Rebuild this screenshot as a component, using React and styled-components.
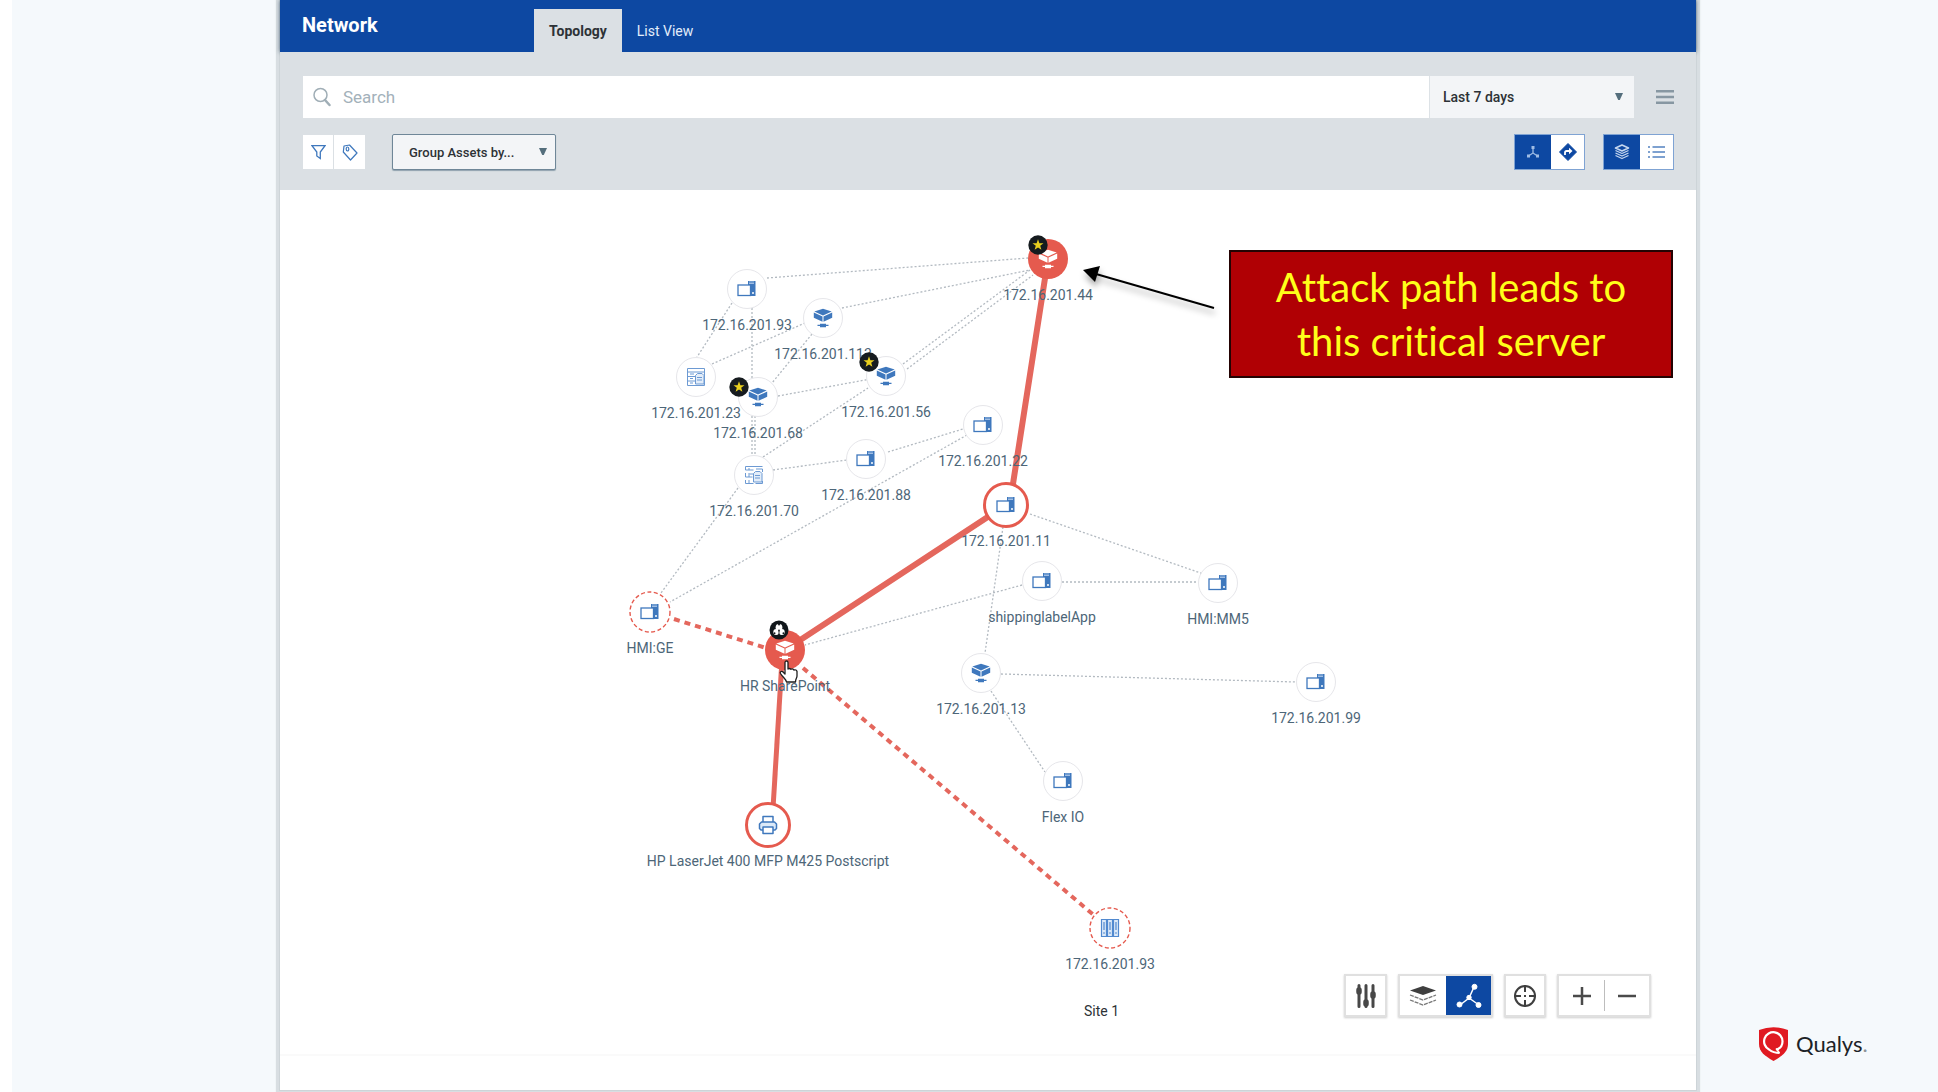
import React from "react";
import styled, { createGlobalStyle, css } from "styled-components";

const color = {
  blue: "#0d48a2",
  bar: "#dbe0e4",
  side: "#f5f9fc",
  icon: "#3f78bd",
  red: "#e55a4e",
  path: "#e4675d",
  text: "#4d6678",
  ink: "#2d3236",
};

const GlobalStyle = createGlobalStyle`
  * { box-sizing: border-box; }
  body { margin: 0; background: #fff; font-family: Roboto, "Liberation Sans", sans-serif; }
  button, input, select { font: inherit; margin: 0; }
  svg { display: block; }
`;

const Page = styled.div`
  display: grid;
  grid-template-columns: 263px minmax(0, 1fr) 237px;
  column-gap: 5px;
  min-height: 100vh;
  margin-left: 12px;
  background: ${color.side};
  overflow: hidden;
`;

const Panel = styled.main`
  grid-column: 2;
  display: flex;
  flex-direction: column;
  margin-bottom: 2px;
  background: #fff;
  box-shadow: 0 0 0 1px #cdd4d8, 0 0 1px 4px #d8dee2;
`;

const Header = styled.header`
  display: flex;
  height: 52px;
  background: ${color.blue};
  box-shadow: 0 0 4px rgba(20, 50, 80, 0.7);
`;

const Title = styled.h1`
  width: 254px;
  margin: 0;
  padding: 0 22px;
  color: #fff;
  font-size: 20px;
  font-weight: 700;
  line-height: 50px;
`;

const Tabs = styled.nav`
  display: flex;
  align-items: flex-end;
`;

const Tab = styled.button`
  height: 43px;
  padding: 0 15px;
  border: 0;
  background: ${(p) => (p.$active ? color.bar : "transparent")};
  color: ${(p) => (p.$active ? color.ink : "#e3edfa")};
  font-size: 14px;
  font-weight: ${(p) => (p.$active ? 700 : 400)};
`;

const Controls = styled.section`
  position: relative;
  display: flex;
  flex-direction: column;
  gap: 16px;
  height: 138px;
  padding: 24px 22px 0 23px;
  background: ${color.bar};
`;

const Row = styled.div`
  display: flex;
  align-items: center;
`;

const SearchBox = styled.label`
  flex: 1;
  display: flex;
  align-items: center;
  gap: 12px;
  height: 42px;
  padding-left: 10px;
  background: #fff;
`;

const SearchInput = styled.input`
  flex: 1;
  min-width: 0;
  height: 40px;
  padding: 0;
  border: 0;
  outline: 0;
  background: none;
  font-size: 17px;
  &::placeholder { color: #a3b1ba; opacity: 1; }
`;

const SelectWrap = styled.span`
  position: relative;
  display: block;
  width: ${(p) => p.$width}px;
  height: ${(p) => p.$height}px;
  margin-left: ${(p) => p.$gap || 0}px;
  svg {
    position: absolute;
    right: ${(p) => p.$arrow}px;
    top: 50%;
    margin-top: -4px;
    pointer-events: none;
  }
`;

const Select = styled.select`
  appearance: none;
  width: 100%;
  height: 100%;
  padding: 0 ${(p) => (p.$outlined ? 16 : 13)}px;
  border: 0 solid #dde2e6;
  border-left-width: 1px;
  border-radius: 0;
  background: #f3f5f7;
  color: ${color.ink};
  font-size: 14px;
  font-weight: 500;
  ${(p) =>
    p.$outlined &&
    css`
      border: 1px solid #6f8798;
      border-radius: 2px;
      box-shadow: 0 1px 1px #8fa1ad;
      font-size: 13px;
    `}
`;

const MenuButton = styled.button`
  display: flex;
  margin-left: 22px;
  padding: 0;
  border: 0;
  background: none;
`;

const Group = styled.div`
  display: flex;
  height: ${(p) => (p.$outlined ? 36 : 34)}px;
  border: ${(p) => (p.$outlined ? "1px solid #7fa3d3" : "0")};
  gap: ${(p) => (p.$outlined ? 0 : 1)}px;
`;

const Toggles = styled.div`
  display: flex;
  gap: 18px;
  margin-left: auto;
`;

const IconButton = styled.button`
  display: flex;
  align-items: center;
  justify-content: center;
  width: ${(p) => p.$width}px;
  padding: 0;
  border: 0;
  background: ${(p) => (p.$active ? color.blue : "#fff")};
`;

const Canvas = styled.section`
  position: relative;
  flex: 1;
  min-height: 864px;
  overflow: hidden;
`;

const Footer = styled.footer`
  height: 36px;
  border-top: 2px solid #fafafa;
`;

const Edges = styled.svg`
  position: absolute;
  left: 0;
  top: 0;
`;

const NodeBox = styled.div`
  position: absolute;
  left: ${(p) => p.$x}px;
  top: ${(p) => p.$y}px;
  width: 0;
  display: flex;
  flex-direction: column;
  align-items: center;
`;

const rings = {
  plain: css`
    width: 40px;
    height: 40px;
    margin-top: -20px;
    border: 1px solid #e6e6ea;
    background: #fff;
  `,
  filled: css`
    width: 40px;
    height: 40px;
    margin-top: -20px;
    border: 0;
    background: ${color.red};
  `,
  ringed: css`
    width: 46px;
    height: 46px;
    margin: -23px 0 -3px;
    border: 3px solid ${color.red};
    background: #fff;
  `,
  dashed: css`
    width: 42px;
    height: 42px;
    margin: -21px 0 -1px;
    border: 0;
    background: #fff;
  `,
};

const Disc = styled.button`
  position: relative;
  flex: none;
  display: flex;
  align-items: center;
  justify-content: center;
  padding: 0;
  border-radius: 50%;
  ${(p) => rings[p.$kind]}
`;

const DashRing = styled.svg`
  position: absolute;
  inset: 0;
`;

const NodeLabel = styled.span`
  margin-top: 7px;
  color: ${color.text};
  font-size: 14px;
  line-height: 18px;
  white-space: nowrap;
`;

const Badge = styled.span`
  position: absolute;
  left: ${(p) => p.$x}px;
  top: ${(p) => p.$y}px;
  margin: -10px;
`;

const Overlay = styled.span`
  position: absolute;
  left: ${(p) => p.$x}px;
  top: ${(p) => p.$y}px;
  pointer-events: none;
`;

const SiteLabel = styled.span`
  position: absolute;
  left: 804px;
  top: 812px;
  color: ${color.ink};
  font-size: 14px;
  line-height: 18px;
`;

const Callout = styled.p`
  position: absolute;
  left: 949px;
  top: 60px;
  width: 444px;
  margin: 0;
  padding: 8px 32px;
  border: 2px solid #240303;
  background: #b00004;
  color: #ffff1a;
  font-family: Lato, "Open Sans", sans-serif;
  font-size: 40px;
  font-variant-ligatures: none;
  line-height: 54px;
  text-align: center;
`;

const Toolbar = styled.div`
  position: absolute;
  right: 45px;
  bottom: 37px;
  display: flex;
  gap: 11px;
`;

const Tools = styled.div`
  display: flex;
  align-items: stretch;
  height: 43px;
  border: 2px solid #e0e0e0;
  background: #fff;
  box-shadow: 0 1px 2px rgba(0, 0, 0, 0.2);
`;

const Divider = styled.span`
  width: 1px;
  margin: 4px 0;
  background: #bdbdbd;
`;

const Brand = styled.a`
  grid-column: 3;
  align-self: end;
  display: flex;
  align-items: center;
  gap: 8px;
  margin: 0 0 31px 58px;
  color: #1c2226;
  font-family: Lato, sans-serif;
  font-size: 22px;
  line-height: 34px;
  text-decoration: none;
`;

const Dot = styled.span`
  color: #8d9499;
`;

const Triangle = ({ fill = "#546e7c" }) => (
  <svg width="8" height="7" viewBox="0 0 8 7" aria-hidden="true">
    <path d="M0 0h8L4.800 7H3.200z" fill={fill} />
  </svg>
);

const SearchIcon = () => (
  <svg width="18" height="20" viewBox="0 0 18 20" fill="none" stroke="#a0aeb6" aria-hidden="true">
    <circle cx="7.500" cy="8" r="6.500" strokeWidth="1.500" />
    <path d="M12 13l4.500 5" strokeWidth="2.500" strokeLinecap="round" />
  </svg>
);

const HamburgerIcon = () => (
  <svg width="18" height="16" viewBox="0 0 18 16" fill="#8797a2" aria-hidden="true">
    <path d="M0 1h18v2.500H0zM0 6.800h18v2.400H0zM0 12.500h18V15H0z" />
  </svg>
);

const FunnelIcon = () => (
  <svg width="15" height="16" viewBox="0 0 15 16" fill="none" stroke={color.icon} strokeWidth="1.300" aria-hidden="true">
    <path d="M1 1.700h13L9.300 8v6.500L5.800 12V8z" />
  </svg>
);

const TagIcon = () => (
  <svg width="16" height="17" viewBox="0 0 16 17" fill="none" stroke={color.icon} strokeWidth="1.200" strokeLinejoin="round" aria-hidden="true">
    <path d="M2 2l5.500-1L15 9l-6.500 7L1.300 8z" />
    <ellipse cx="5.500" cy="5" rx="1.300" ry="2" />
  </svg>
);

const HubIcon = () => (
  <svg width="14" height="14" viewBox="0 0 14 14" fill="#9fbce4" stroke="#9fbce4" aria-hidden="true">
    <path d="M7 3v5l-4.500 3M7 8l4.500 3" fill="none" strokeWidth="1.300" />
    <path d="M5.500 1h3v3h-3zM1 9.500h3v3H1zM10 9.500h3v3h-3z" stroke="none" />
  </svg>
);

const DirectionIcon = () => (
  <svg width="18" height="18" viewBox="0 0 18 18" aria-hidden="true">
    <path d="M9 .5L17.500 9 9 17.500.5 9z" fill={color.blue} stroke={color.blue} strokeLinejoin="round" />
    <path d="M6 12V9.500Q6 8 7.500 8H11" fill="none" stroke="#fff" strokeWidth="1.800" />
    <path d="M10 4.800L13.500 8 10 11.200z" fill="#fff" />
  </svg>
);

const LayersIcon = () => (
  <svg width="16" height="16" viewBox="0 0 16 16" fill="none" stroke="#c4d6ef" strokeWidth="1.300" strokeLinejoin="round" aria-hidden="true">
    <path d="M8 1l6.500 3L8 7 1.500 4z" strokeWidth="1.600" />
    <path d="M1.500 6.500L8 9.500l6.500-3M1.500 9L8 12l6.500-3M1.500 11.500L8 14.500l6.500-3" />
  </svg>
);

const ListIcon = () => (
  <svg width="17" height="14" viewBox="0 0 17 14" fill="#7ea1d0" aria-hidden="true">
    <path d="M0 1h2v2H0zM4.500 1H17v2H4.500zM0 6h2v2H0zM4.500 6H17v2H4.500zM0 11h2v2H0zM4.500 11H17v2H4.500z" />
  </svg>
);

const SlidersIcon = () => (
  <svg width="22" height="24" viewBox="0 0 22 24" stroke="#474747" strokeLinecap="round" fill="none" aria-hidden="true">
    <path d="M4 1.500v21M11 1.500v21M18 1.500v21" strokeWidth="3" />
    <path d="M4 6v2M11 18v2M18 10v2" strokeWidth="5.500" />
  </svg>
);

const StackIcon = () => (
  <svg width="28" height="20" viewBox="0 0 28 20" fill="none" stroke="#777" strokeWidth="1.300" aria-hidden="true">
    <path d="M14 0l13 4.500L14 9 1 4.500z" fill="#3f3f3f" stroke="none" />
    <path d="M1 9l13 5 13-5M1 14l13 5 13-5" strokeDasharray="4 1" />
  </svg>
);

const GraphIcon = () => (
  <svg width="26" height="26" viewBox="0 0 26 26" fill="#fff" stroke="#fff" aria-hidden="true">
    <path d="M18 4l-5 11-9 7M13 15l10 7" fill="none" strokeWidth="1.500" />
    <circle cx="18.500" cy="3.800" r="2.500" />
    <circle cx="13" cy="14.500" r="2.200" />
    <circle cx="3.500" cy="21.500" r="2.500" />
    <circle cx="22.500" cy="22" r="2.500" />
  </svg>
);

const TargetIcon = () => (
  <svg width="24" height="24" viewBox="0 0 24 24" fill="none" stroke="#3f3f3f" strokeWidth="2" aria-hidden="true">
    <circle cx="12" cy="12" r="10" />
    <path d="M12 1v7M12 16v7M1 12h7M16 12h7M11 12h2" />
  </svg>
);

const PlusIcon = () => (
  <svg width="18" height="18" viewBox="0 0 18 18" stroke="#4a4a4a" strokeWidth="2.500" aria-hidden="true">
    <path d="M9 0v18M0 9h18" />
  </svg>
);

const MinusIcon = () => (
  <svg width="18" height="18" viewBox="0 0 18 18" stroke="#4a4a4a" strokeWidth="2.500" aria-hidden="true">
    <path d="M0 9h18" />
  </svg>
);

const ComputerIcon = () => (
  <svg width="20" height="18" viewBox="0 0 20 18" aria-hidden="true">
    <path d="M11 1h7.500v15H13V5h-2z" fill={color.icon} />
    <path d="M12 3.500h5M12 2h5" stroke="#b9d0ee" strokeWidth=".8" />
    <rect x="1" y="5" width="12.500" height="10.500" fill="#fff" stroke={color.icon} strokeWidth="1.300" />
    <circle cx="16" cy="13" r="1" fill="#fff" />
  </svg>
);

const SwitchIcon = ({ fill = color.icon }) => (
  <svg width="20" height="20" viewBox="0 0 20 20" fill={fill} aria-hidden="true">
    <path d="M10 .8l8.700 2.700L10 7.400 1.300 3.500zM.8 4.600l8.700 3.900v5.300L.8 9.800zM19.200 4.600l-8.700 3.900v5.300l8.700-4z" />
    <path d="M7 15.800h6v3.400H7zM4.500 16.800h11v1.300h-11z" />
  </svg>
);

const ServerIcon = ({ light }) => (
  <svg width="20" height="20" viewBox="0 0 20 20" fill="none" stroke="#6d9ad3" strokeWidth="1" aria-hidden="true">
    {light ? (
      <path d="M1.500 1.500h17M1.500 1.500v3.500h8M1.500 8v4h7M1.500 15v3.500h8M5 3v2M5 8v4M5 15v3M12 4h6.500v3M9.500 9h-4M18.500 16v2.500h-7" />
    ) : (
      <path d="M1.500 1.500h17v17h-17zM1.500 5h17M1.500 9.500H9M1.500 14H9M4 11.500h3M4 16h3M4 7h4" />
    )}
    <path d="M9.500 8.500l2-2h4.500l2 2v8.500h-8.500z" fill="#e3edf9" />
    <path d="M11 10.500h5M11 13h5" />
  </svg>
);

const PrinterIcon = () => (
  <svg width="20" height="20" viewBox="0 0 20 20" fill="#fff" stroke={color.icon} strokeWidth="1.500" strokeLinejoin="round" aria-hidden="true">
    <path d="M5 7V1.500h10V7" />
    <path d="M5 15H3l-1.500-1.500V9L3.500 7h13l2 2v4.500L17 15h-2" fill="#dbe9f8" />
    <path d="M5 12h10v6.500H5z" />
  </svg>
);

const RackIcon = () => (
  <svg width="20" height="20" viewBox="0 0 20 20" fill="#dce9f8" stroke="#5189cf" strokeWidth="1.200" aria-hidden="true">
    <path d="M1.500 1.500h5v17h-5zM7.500 1.500h5v17h-5zM13.500 1.500h5v17h-5z" />
    <path d="M4 4v8M10 4v8M16 4v8M3 15h2M9 15h2M15 15h2" fill="none" />
  </svg>
);

const StarBadge = () => (
  <svg width="20" height="20" viewBox="0 0 20 20" aria-hidden="true">
    <circle cx="10" cy="10" r="9.700" fill="#161b1f" />
    <path d="M10 4.200l1.400 4h4.100l-3.300 2.500 1.200 4.100L10 12.400l-3.400 2.400 1.200-4.100-3.300-2.500h4.100z" fill="#e9cf1e" />
  </svg>
);

const BiohazardBadge = () => (
  <svg width="20" height="20" viewBox="0 0 20 20" aria-hidden="true">
    <circle cx="10" cy="10" r="9.500" fill="#11171b" />
    <g fill="#fff">
      <circle cx="10" cy="7.500" r="3.400" />
      <circle cx="7.200" cy="12" r="2.900" />
      <circle cx="12.800" cy="12" r="2.900" />
    </g>
    <g fill="#11171b">
      <circle cx="10" cy="4.500" r="1" />
      <circle cx="5.600" cy="13.200" r=".9" />
      <circle cx="14.400" cy="13.200" r=".9" />
      <circle cx="10" cy="10.500" r=".9" />
      <path d="M9.600 11h.8v4h-.8z" />
    </g>
  </svg>
);

const HandIcon = () => (
  <svg width="20" height="24" viewBox="0 0 20 24" aria-hidden="true">
    <path
      d="M6 2.500C6 .5 9 .5 9 2.500V9q1.500-1.200 3 .3 1.800-1 2.800.7 2.700-.7 3.200 1.500v4.500c0 2-1.500 3-1.500 6H7.500C7 19 4 17.500 1.500 13.500.5 11.500 3 10.500 4.500 12.500L6 14z"
      fill="#fff"
      stroke="#1d1d1d"
      strokeWidth="1.300"
      strokeLinejoin="round"
    />
  </svg>
);

const QualysMark = () => (
  <svg width="29" height="34" viewBox="0 0 29 34" aria-hidden="true">
    <path d="M0 3Q14.500-2.500 29 3v14c0 8-6 12-14.500 17C6 29 0 25 0 17z" fill="#e01a22" />
    <path d="M17.500 22.800q6-2.300 6-8.300a9.200 9.200 0 1 0-13.500 8q4.500 3.500 10.500 3.500" fill="none" stroke="#fff" strokeWidth="2.200" />
    <path d="M17 21.500l3.500 4.500" stroke="#fff" strokeWidth="1.500" />
  </svg>
);

const icons = {
  computer: <ComputerIcon />,
  switch: <SwitchIcon />,
  switchWhite: <SwitchIcon fill="#fff" />,
  server: <ServerIcon />,
  serverLight: <ServerIcon light />,
  printer: <PrinterIcon />,
  rack: <RackIcon />,
};

const nodes = [
  { x: 467, y: 99, label: "172.16.201.93", icon: "computer" },
  { x: 543, y: 128, label: "172.16.201.113", icon: "switch" },
  { x: 416, y: 187, label: "172.16.201.23", icon: "server" },
  { x: 478, y: 207, label: "172.16.201.68", icon: "switch", badge: { x: 0, y: 9 } },
  { x: 606, y: 186, label: "172.16.201.56", icon: "switch", badge: { x: 2, y: 5 } },
  { x: 703, y: 235, label: "172.16.201.22", icon: "computer" },
  { x: 586, y: 269, label: "172.16.201.88", icon: "computer" },
  { x: 474, y: 285, label: "172.16.201.70", icon: "serverLight" },
  { x: 768, y: 69, label: "172.16.201.44", icon: "switchWhite", kind: "filled", badge: { x: 10, y: 6 } },
  { x: 726, y: 315, label: "172.16.201.11", icon: "computer", kind: "ringed" },
  { x: 370, y: 422, label: "HMI:GE", icon: "computer", kind: "dashed" },
  { x: 505, y: 460, label: "HR SharePoint", icon: "switchWhite", kind: "filled", badge: { x: 14, y: 0, hazard: true } },
  { x: 488, y: 635, label: "HP LaserJet 400 MFP M425 Postscript", icon: "printer", kind: "ringed" },
  { x: 762, y: 391, label: "shippinglabelApp", icon: "computer" },
  { x: 938, y: 393, label: "HMI:MM5", icon: "computer" },
  { x: 701, y: 483, label: "172.16.201.13", icon: "switch" },
  { x: 1036, y: 492, label: "172.16.201.99", icon: "computer" },
  { x: 783, y: 591, label: "Flex IO", icon: "computer" },
  { x: 830, y: 738, label: "172.16.201.93", icon: "rack", kind: "dashed" },
];

const links = [
  "M487 88L748 68",
  "M562 118L750 80",
  "M452 113L417 167",
  "M472 118V266",
  "M432 174L525 133",
  "M532 144L492 193",
  "M498 206L607 186",
  "M483 267L588 198",
  "M623 174L750 80",
  "M627 179L753 85",
  "M475 226V265",
  "M493 280L567 270",
  "M608 262L683 239",
  "M458 298L381 403",
  "M687 245L390 412",
  "M750 324L938 389",
  "M782 392H918",
  "M723 337L705 463",
  "M742 395L525 455",
  "M721 484L1016 492",
  "M711 501L765 582",
];

function Node({ x, y, label, icon, kind = "plain", badge }) {
  return (
    <NodeBox $x={x} $y={y}>
      <Disc $kind={kind} aria-label={label}>
        {kind === "dashed" && (
          <DashRing width="42" height="42" viewBox="0 0 42 42" fill="none" stroke={color.red}>
            <circle cx="21" cy="21" r="20" strokeWidth="1.400" strokeDasharray="4 2.500" />
          </DashRing>
        )}
        {icons[icon]}
        {badge && (
          <Badge $x={badge.x} $y={badge.y}>
            {badge.hazard ? <BiohazardBadge /> : <StarBadge />}
          </Badge>
        )}
      </Disc>
      <NodeLabel>{label}</NodeLabel>
    </NodeBox>
  );
}

export default function App() {
  return (
    <>
      <GlobalStyle />
      <Page>
        <Panel>
          <Header>
            <Title>Network</Title>
            <Tabs>
              <Tab $active>Topology</Tab>
              <Tab>List View</Tab>
            </Tabs>
          </Header>

          <Controls>
            <Row>
              <SearchBox>
                <SearchIcon />
                <SearchInput type="text" placeholder="Search" aria-label="Search" />
              </SearchBox>
              <SelectWrap $width={205} $height={42} $arrow={11}>
                <Select aria-label="Time range">
                  <option>Last 7 days</option>
                </Select>
                <Triangle />
              </SelectWrap>
              <MenuButton aria-label="Menu">
                <HamburgerIcon />
              </MenuButton>
            </Row>
            <Row>
              <Group>
                <IconButton $width={30} aria-label="Filter"><FunnelIcon /></IconButton>
                <IconButton $width={31} aria-label="Tags"><TagIcon /></IconButton>
              </Group>
              <SelectWrap $width={164} $height={36} $arrow={9} $gap={27}>
                <Select $outlined aria-label="Group assets">
                  <option>Group Assets by...</option>
                </Select>
                <Triangle />
              </SelectWrap>
              <Toggles>
                <Group $outlined>
                  <IconButton $width={36} $active aria-label="Topology"><HubIcon /></IconButton>
                  <IconButton $width={33} aria-label="Directions"><DirectionIcon /></IconButton>
                </Group>
                <Group $outlined>
                  <IconButton $width={36} $active aria-label="Layers"><LayersIcon /></IconButton>
                  <IconButton $width={33} aria-label="List"><ListIcon /></IconButton>
                </Group>
              </Toggles>
            </Row>
          </Controls>

          <Canvas>
            <Edges width="1417" height="864" viewBox="0 0 1417 864" fill="none" aria-hidden="true">
              <g stroke="#b3bac1" strokeWidth="1.300" strokeDasharray="2 2">
                {links.map((d) => <path key={d} d={d} />)}
              </g>
              <g stroke={color.path}>
                <path d="M768 69L730 313M726 315L505 460" strokeWidth="6" />
                <path d="M502 470L492 635" strokeWidth="5" />
                <path d="M394 429L486 458" strokeWidth="4" strokeDasharray="6 5" />
                <path d="M523 478L816 727" strokeWidth="4" strokeDasharray="6 5" />
              </g>
              <g filter="drop-shadow(1px 5px 3px rgba(0,0,0,.35))">
                <path d="M816 84L934 118" stroke="#000" strokeWidth="2" />
                <path d="M803 80l17-4-5 16z" fill="#000" />
              </g>
            </Edges>

            {nodes.map((n) => <Node key={`${n.x}-${n.y}`} {...n} />)}

            <Overlay $x={499} $y={470}><HandIcon /></Overlay>
            <SiteLabel>Site 1</SiteLabel>
            <Callout>Attack path leads to this critical server</Callout>

            <Toolbar>
              <Tools>
                <IconButton $width={39} aria-label="Settings"><SlidersIcon /></IconButton>
              </Tools>
              <Tools>
                <IconButton $width={46} aria-label="Layered view"><StackIcon /></IconButton>
                <IconButton $width={45} $active aria-label="Graph view"><GraphIcon /></IconButton>
              </Tools>
              <Tools>
                <IconButton $width={38} aria-label="Recenter"><TargetIcon /></IconButton>
              </Tools>
              <Tools>
                <IconButton $width={45} aria-label="Zoom in"><PlusIcon /></IconButton>
                <Divider />
                <IconButton $width={44} aria-label="Zoom out"><MinusIcon /></IconButton>
              </Tools>
            </Toolbar>
          </Canvas>
          <Footer />
        </Panel>
        <Brand href="#">
          <QualysMark />
          <span>Qualys<Dot>.</Dot></span>
        </Brand>
      </Page>
    </>
  );
}
